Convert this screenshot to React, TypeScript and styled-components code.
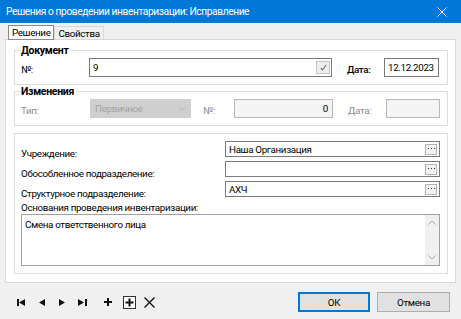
import React, { FC } from "react";
import styled, { createGlobalStyle } from "styled-components";

const GlobalStyle = createGlobalStyle`
  html, body {
    margin: 0;
    padding: 0;
    background: #f0f0f0;
  }
  body {
    font-family: Roboto, "Noto Sans", sans-serif;
    font-size: 9.8px;
    letter-spacing: -0.35px;
    color: #000;
  }
  * {
    box-sizing: border-box;
  }
`;

const Window = styled.div`
  width: 461px;
  height: 319px;
  display: flex;
  flex-direction: column;
  background: #f0f0f0;
  overflow: hidden;
`;

const TitleBar = styled.div`
  height: 23px;
  flex: none;
  background: #0078d7;
  color: #fff;
  display: flex;
  align-items: center;
  justify-content: space-between;
  padding: 0 14px 0 6px;
  font-size: 10.2px;
  letter-spacing: -0.4px;
`;

const TabBar = styled.div`
  height: 16px;
  flex: none;
  display: flex;
  align-items: flex-end;
  padding-left: 8px;
`;

const Tab = styled.div<{ $active?: boolean }>`
  height: ${(p) => (p.$active ? 15 : 13)}px;
  padding: 0 3px;
  display: flex;
  align-items: center;
  border: 1px solid ${(p) => (p.$active ? "#8a8a8a" : "#d9d9d9")};
  border-bottom: ${(p) => (p.$active ? "1px solid #8a8a8a" : "none")};
  background: ${(p) => (p.$active ? "#fff" : "#f0f0f0")};
  margin-bottom: ${(p) => (p.$active ? -1 : 0)}px;
  position: relative;
  z-index: ${(p) => (p.$active ? 1 : 0)};
`;

const Panel = styled.div`
  margin: 0 5px;
  height: 244px;
  flex: none;
  background: #fff;
  border: 1px solid #d9d9d9;
  padding: 4px 7px 0 8px;
  display: flex;
  flex-direction: column;
`;

const Group = styled.fieldset<{ $gap?: number }>`
  margin: ${(p) => p.$gap ?? 0}px 0 0 0;
  padding: 0 7px 7px 6px;
  border: 1px solid #dcdcdc;
  min-width: 0;
`;

const GroupPlain = styled(Group)`
  padding-top: 7px;
`;

const Legend = styled.legend`
  padding: 0 2px 0 0;
  font-weight: bold;
  font-size: 10.5px;
  letter-spacing: -0.3px;
  line-height: 13px;
  height: 13px;
`;

const Row = styled.div`
  display: flex;
  align-items: flex-end;
  height: 19px;
  margin-top: 1px;
`;

const Label = styled.span<{ $w: number; $disabled?: boolean; $strong?: boolean }>`
  width: ${(p) => p.$w}px;
  flex: none;
  line-height: 13px;
  padding-bottom: 1px;
  color: ${(p) => (p.$disabled ? "#8d8d8d" : "#000")};
  font-weight: ${(p) => (p.$strong ? 500 : 400)};
  white-space: nowrap;
`;

const Field = styled.div<{ $w: number; $disabled?: boolean; $right?: boolean }>`
  width: ${(p) => p.$w}px;
  height: 19px;
  flex: none;
  display: flex;
  align-items: center;
  justify-content: ${(p) => (p.$right ? "flex-end" : "flex-start")};
  padding: 0 4px 0 3px;
  border: 1px solid ${(p) => (p.$disabled ? "#b9b9b9" : "#7a7a7a")};
  background: ${(p) => (p.$disabled ? "#f4f4f4" : "#fff")};
  white-space: nowrap;
  overflow: hidden;
`;

const CheckBtn = styled.div`
  margin-left: auto;
  margin-right: -3px;
  width: 14px;
  height: 13px;
  border: 1px solid #c3c3c3;
  background: #eeeeee;
  display: flex;
  align-items: center;
  justify-content: center;
`;

const Combo = styled.div<{ $w: number }>`
  width: ${(p) => p.$w}px;
  height: 19px;
  flex: none;
  display: flex;
  align-items: center;
  justify-content: space-between;
  padding: 0 5px 0 5px;
  background: #cfcfcf;
  color: #a3a3a3;
`;

const Spacer = styled.span<{ $w: number }>`
  width: ${(p) => p.$w}px;
  flex: none;
`;

const RefGrid = styled.div`
  display: grid;
  grid-template-columns: 204px 1fr;
  grid-auto-rows: 16px;
  row-gap: 4px;
`;

const RefLabel = styled.span`
  line-height: 13px;
  padding-top: 6px;
  white-space: nowrap;
`;

const RefField = styled.div`
  height: 16px;
  border: 1px solid #7a7a7a;
  background: #fff;
  display: flex;
  align-items: center;
  padding: 0 2px 0 3px;
`;

const Dots = styled.div`
  margin-left: auto;
  width: 12px;
  height: 11px;
  border: 1px solid #b5b5b5;
  background: #f2f2f2;
  display: flex;
  align-items: center;
  justify-content: center;
`;

const Caption = styled.div`
  margin-top: 4px;
  line-height: 13px;
`;

const Memo = styled.div`
  height: 52px;
  border: 1px solid #a0a0a0;
  display: flex;
`;

const MemoText = styled.div`
  flex: 1;
  padding: 3px 3px;
  line-height: 13px;
`;

const ScrollBar = styled.div`
  width: 14px;
  background: #f0f0f0;
  display: flex;
  flex-direction: column;
  justify-content: space-between;
  align-items: center;
  padding: 5px 0;
`;

const BottomBar = styled.div`
  flex: 1;
  display: flex;
  align-items: center;
  justify-content: space-between;
  padding: 2px 11px 0 17px;
`;

const NavGroup = styled.div`
  display: flex;
  align-items: center;
`;

const IconSlot = styled.span<{ $ml?: number }>`
  display: flex;
  margin-left: ${(p) => p.$ml ?? 0}px;
`;

const Buttons = styled.div`
  display: flex;
  gap: 7px;
`;

const Button = styled.div<{ $default?: boolean; $w: number }>`
  width: ${(p) => p.$w}px;
  height: 20px;
  display: flex;
  align-items: center;
  justify-content: center;
  background: #e1e1e1;
  border: ${(p) => (p.$default ? "2px solid #0078d7" : "1px solid #adadad")};
`;

const Chevron: FC<{ up?: boolean; color?: string }> = ({ up, color = "#a6a6a6" }) => (
  <svg width="8" height="5" viewBox="0 0 8 5">
    <polyline
      points={up ? "0.5,4.5 4,1 7.5,4.5" : "0.5,0.5 4,4 7.5,0.5"}
      fill="none"
      stroke={color}
      strokeWidth="1"
    />
  </svg>
);

const Ellipsis: FC = () => (
  <Dots>
    <svg width="7" height="2" viewBox="0 0 7 2">
      <rect x="0" y="0" width="1" height="1" fill="#333" />
      <rect x="3" y="0" width="1" height="1" fill="#333" />
      <rect x="6" y="0" width="1" height="1" fill="#333" />
    </svg>
  </Dots>
);

const App: FC = () => {
  return (
    <Window>
      <GlobalStyle />
      <TitleBar>
        <span>Решения о проведении инвентаризации: Исправление</span>
        <svg width="10" height="10" viewBox="0 0 10 10">
          <path d="M0.5 0.5 L9.5 9.5 M9.5 0.5 L0.5 9.5" stroke="#fff" strokeWidth="1" />
        </svg>
      </TitleBar>

      <TabBar>
        <Tab $active>Решение</Tab>
        <Tab>Свойства</Tab>
      </TabBar>

      <Panel>
        <Group>
          <Legend>Документ</Legend>
          <Row>
            <Label $w={68}>№:</Label>
            <Field $w={243}>
              9
              <CheckBtn>
                <svg width="7" height="7" viewBox="0 0 7 7">
                  <polyline points="0.8,4 2.6,5.8 6.2,1" fill="none" stroke="#777" strokeWidth="1.2" />
                </svg>
              </CheckBtn>
            </Field>
            <Spacer $w={15} />
            <Label $w={37} $strong>
              Дата:
            </Label>
            <Field $w={55}>12.12.2023</Field>
          </Row>
        </Group>

        <Group>
          <Legend>Изменения</Legend>
          <Row>
            <Label $w={69} $disabled>
              Тип:
            </Label>
            <Combo $w={101}>
              Первичное
              <Chevron color="#b4b4b4" />
            </Combo>
            <Spacer $w={12} />
            <Label $w={31} $disabled>
              №:
            </Label>
            <Field $w={99} $disabled $right>
              0
            </Field>
            <Spacer $w={15} />
            <Label $w={38} $disabled>
              Дата:
            </Label>
            <Field $w={54} $disabled />
          </Row>
        </Group>

        <GroupPlain $gap={7}>
          <RefGrid>
            <RefLabel>Учреждение:</RefLabel>
            <RefField>
              Наша Организация
              <Ellipsis />
            </RefField>
            <RefLabel>Обособленное подразделение:</RefLabel>
            <RefField>
              <Ellipsis />
            </RefField>
            <RefLabel>Структурное подразделение:</RefLabel>
            <RefField>
              АХЧ
              <Ellipsis />
            </RefField>
          </RefGrid>
          <Caption>Основания проведения инвентаризации:</Caption>
          <Memo>
            <MemoText>Смена ответственного лица</MemoText>
            <ScrollBar>
              <Chevron up />
              <Chevron />
            </ScrollBar>
          </Memo>
        </GroupPlain>
      </Panel>

      <BottomBar>
        <NavGroup>
          <IconSlot>
            <svg width="8" height="7" viewBox="0 0 8 7">
              <rect x="0" y="0" width="2" height="7" fill="#111" />
              <polygon points="8,0 8,7 2,3.5" fill="#111" />
            </svg>
          </IconSlot>
          <IconSlot $ml={13}>
            <svg width="7" height="7" viewBox="0 0 7 7">
              <polygon points="7,0 7,7 1,3.5" fill="#111" />
            </svg>
          </IconSlot>
          <IconSlot $ml={14}>
            <svg width="7" height="7" viewBox="0 0 7 7">
              <polygon points="0,0 0,7 6,3.5" fill="#111" />
            </svg>
          </IconSlot>
          <IconSlot $ml={12}>
            <svg width="9" height="7" viewBox="0 0 9 7">
              <polygon points="0,0 0,7 6,3.5" fill="#111" />
              <rect x="7" y="0" width="2" height="7" fill="#111" />
            </svg>
          </IconSlot>
          <IconSlot $ml={17}>
            <svg width="8" height="8" viewBox="0 0 8 8">
              <path d="M3 0 H5 V3 H8 V5 H5 V8 H3 V5 H0 V3 H3 Z" fill="#111" />
            </svg>
          </IconSlot>
          <IconSlot $ml={11}>
            <svg width="13" height="13" viewBox="0 0 13 13">
              <rect x="0.5" y="0.5" width="12" height="12" fill="#fff" stroke="#333" />
              <path d="M5.5 2.5 H7.5 V5.5 H10.5 V7.5 H7.5 V10.5 H5.5 V7.5 H2.5 V5.5 H5.5 Z" fill="#111" />
            </svg>
          </IconSlot>
          <IconSlot $ml={8}>
            <svg width="11" height="11" viewBox="0 0 11 11">
              <path d="M0.5 0.5 L10.5 10.5 M10.5 0.5 L0.5 10.5" stroke="#111" strokeWidth="1.4" />
            </svg>
          </IconSlot>
        </NavGroup>
        <Buttons>
          <Button $default $w={72}>
            ОК
          </Button>
          <Button $w={73}>Отмена</Button>
        </Buttons>
      </BottomBar>
    </Window>
  );
};

export default App;
